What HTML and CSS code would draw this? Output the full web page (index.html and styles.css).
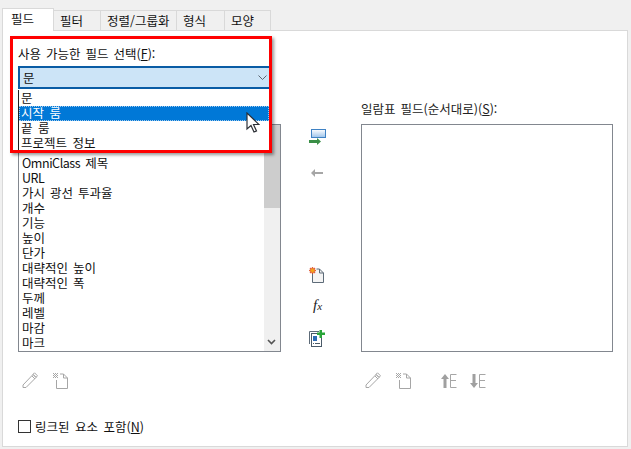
FILE: index.html
```html
<!DOCTYPE html>
<html lang="ko">
<head>
<meta charset="utf-8">
<title>일람표 특성</title>
<link rel="stylesheet" href="styles.css">
</head>
<body>
<div class="dialog">
  <div class="tabs">
    <div class="tab active">필드</div>
    <div class="tab w47">필터</div>
    <div class="tab w76">정렬/그룹화</div>
    <div class="tab w48">형식</div>
    <div class="tab w46">모양</div>
  </div>
  <div class="panel">
    <div class="label">사용 가능한 필드 선택(<u>F</u>):</div>
    <div class="select">
      <span>문</span>
      <svg class="chev" width="9" height="5" viewBox="0 0 9 5"><path d="M.5.5l4 4 4-4" fill="none" stroke="#5a6470"/></svg>
    </div>
    <div class="columns">
      <div class="col">
        <div class="sub"></div>
        <div class="listbox">
          <div class="rows">
            <div></div>
            <div></div>
            <div><span class="lat">OmniClass</span> 제목</div>
            <div><span class="lat">URL</span></div>
            <div>가시 광선 투과율</div>
            <div>개수</div>
            <div>기능</div>
            <div>높이</div>
            <div>단가</div>
            <div>대략적인 높이</div>
            <div>대략적인 폭</div>
            <div>두께</div>
            <div>레벨</div>
            <div>마감</div>
            <div>마크</div>
          </div>
          <div class="scroll">
            <div class="thumb"></div>
            <svg class="down" width="9" height="6" viewBox="0 0 9 6"><path d="M1 1l3.500 3.500L8 1" fill="none" stroke="#555" stroke-width="1.600"/></svg>
          </div>
        </div>
        <div class="tools">
          <svg width="16" height="17" viewBox="0 0 16 17"><path d="M1 13L11 2.500l3 3L4 15.500H1zM10 4l3 3M12.500.8l3 3-1.500 1.500-3-3z" fill="none" stroke="#a6a6a6"/></svg>
          <svg width="15" height="17" viewBox="0 0 15 17"><path d="M3.500 8v8.500h11V6l-4-4H7M10.500 2v4h4" fill="none" stroke="#a6a6a6"/><path d="M0 1h1v1H0zM2 1h1v1H2zM4 1h1v1H4zM1 2h1v1H1zM3 2h1v1H3zM0 3h1v1H0zM2 3h1v1H2zM4 3h1v1H4zM1 4h1v1H1zM3 4h1v1H3zM0 5h1v1H0zM2 5h1v1H2zM4 5h1v1H4z" fill="#a6a6a6"/></svg>
        </div>
      </div>
      <div class="mid">
        <svg class="m-add" width="17" height="17" viewBox="0 0 17 17">
          <defs><linearGradient id="g" x1="0" y1="0" x2="0" y2="1"><stop offset="0" stop-color="#fff"/><stop offset="1" stop-color="#9cc3ea"/></linearGradient></defs>
          <rect x="2.500" y=".5" width="14" height="8" fill="url(#g)" stroke="#3f82c4"/>
          <path d="M0 11h8V9l4 3.500L8 16v-2H0z" fill="#3a8f46"/>
        </svg>
        <svg class="m-rem" width="12" height="8" viewBox="0 0 12 8"><path d="M12 3H4V0L0 4l4 4V5h8z" fill="#a6a6a6"/></svg>
        <svg class="m-new" width="16" height="16" viewBox="0 0 16 16">
          <path d="M3.500 6v9.500h11V6l-4-4H7.500M10.500 2v4h4" fill="#f4f4f4" stroke="#5d6b78"/>
          <path d="M3.500 0l.8 1.700L6 1l-.7 1.700L7 3.500l-1.700.8L6 6l-1.700-.7L3.500 7l-.8-1.700L1 6l.7-1.700L0 3.500l1.700-.8L1 1l1.700.7z" fill="#f2a21b" stroke="#d8301a" stroke-width=".6"/>
        </svg>
        <div class="fx"><i>f</i><i class="x">x</i></div>
        <svg class="m-param" width="16" height="17" viewBox="0 0 16 17">
          <path d="M.5 14V1.500H10" fill="none" stroke="#5d6b78"/>
          <rect x="2.500" y="3.500" width="10" height="13" fill="#fff" stroke="#4a5a68"/>
          <rect x="4" y="6" width="4" height="5" fill="#2d6cb4"/>
          <path d="M6 13.500h5M4 13.500h1" stroke="#4a5a68"/>
          <path d="M10.500 0h2.500v2.500h3V5h-3v3h-2.500V5H8V2.500h2.500z" fill="#2aa53a"/>
        </svg>
      </div>
      <div class="col right">
        <div class="label sub on">일람표 필드(순서대로)(<u>S</u>):</div>
        <div class="listbox"></div>
        <div class="tools">
          <svg width="16" height="17" viewBox="0 0 16 17"><path d="M1 13L11 2.500l3 3L4 15.500H1zM10 4l3 3M12.500.8l3 3-1.500 1.500-3-3z" fill="none" stroke="#a6a6a6"/></svg>
          <svg width="15" height="17" viewBox="0 0 15 17"><path d="M3.500 8v8.500h11V6l-4-4H7M10.500 2v4h4" fill="none" stroke="#a6a6a6"/><path d="M0 1h1v1H0zM2 1h1v1H2zM4 1h1v1H4zM1 2h1v1H1zM3 2h1v1H3zM0 3h1v1H0zM2 3h1v1H2zM4 3h1v1H4zM1 4h1v1H1zM3 4h1v1H3zM0 5h1v1H0zM2 5h1v1H2zM4 5h1v1H4z" fill="#a6a6a6"/></svg>
          <svg class="t-up" width="16" height="14" viewBox="0 0 16 14"><path d="M4 0l4 5H5.500v9h-3V5H0z" fill="#a0a0a0"/><path d="M15.500 .5H9.500v13h6M9.500 6.500h5.500" fill="none" stroke="#a6a6a6"/></svg>
          <svg class="t-down" width="16" height="14" viewBox="0 0 16 14"><path d="M4 14l4-5H5.500V0h-3v9H0z" fill="#a0a0a0"/><path d="M15.500 .5H9.500v13h6M9.500 6.500h5.500" fill="none" stroke="#a6a6a6"/></svg>
        </div>
      </div>
    </div>
    <label class="check"><span class="box"></span>링크된 요소 포함(<u>N</u>)</label>

    <div class="menu">
      <div class="item">문</div>
      <div class="item hot">시작 룸</div>
      <div class="item">끝 룸</div>
      <div class="item">프로젝트 정보</div>
    </div>
    <div class="callout"></div>
    <svg class="cursor" width="14" height="21" viewBox="0 0 14 21"><path d="M1 1v16l4-3.500 3 6.500 2.500-1-3-6.500H13z" fill="#fff" stroke="#2c3036" stroke-width="1.200"/></svg>
  </div>
</div>
</body>
</html>
```
FILE: styles.css
```css
* { box-sizing: border-box; }
html, body { margin: 0; height: 100%; }
body {
  width: 631px;
  height: 449px;
  overflow: hidden;
  background: #f0f0f0;
  font-family: "Noto Sans CJK KR", "Noto Sans", sans-serif;
  font-size: 12.500px;
  color: #111;
}
.dialog { padding: 8px 3px 2px 2px; height: 449px; display: flex; flex-direction: column; }
.tabs { display: flex; height: 22px; align-items: flex-end; }
.tab {
  height: 20px;
  width: 47px;
  padding: 0 0 0 6px;
  line-height: 20px;
  font-size: 12.500px;
  background: #f0f0f0;
  border: 1px solid #d9d9d9;
  border-bottom: 0;
  margin-left: -1px;
  word-spacing: 1px;
}
.tab.active {
  height: 23px;
  width: 52px;
  margin: 0 0 -1px 0;
  padding-left: 8px;
  line-height: 19px;
  background: #fff;
  position: relative;
  z-index: 1;
}
.tab.w47 { width: 48px; }
.tab.w76 { width: 77px; }
.tab.w48 { width: 49px; }
.tab.w46 { width: 47px; }
.panel {
  flex: 1;
  position: relative;
  background: #fff;
  border: 1px solid #d9d9d9;
  padding: 14px 0 0 15px;
}
.label { height: 18px; line-height: 17px; word-spacing: 1.500px; }
.select {
  margin-top: 3px;
  width: 251px;
  height: 23px;
  background: #cce4f7;
  border: 2px solid #0a5ca5;
  border-right: 0;
  padding-left: 3px;
  line-height: 19px;
  display: flex;
  justify-content: space-between;
  align-items: center;
}
.chev { margin-right: 2px; }
.columns { display: flex; margin-top: 11px; }
.col { width: 263px; }
.right { width: 252px; }
.sub { height: 24px; }
.on { color: #222; }
.listbox {
  height: 228px;
  border: 1px solid #82878f;
  background: #fff;
  display: flex;
  overflow: hidden;
}
.rows { flex: 1; padding-left: 3px; line-height: 15px; word-spacing: 1.500px; }
.rows div { height: 15px; white-space: nowrap; }
.lat { letter-spacing: -.45px; }
.scroll { width: 16px; background: #f0f0f0; position: relative; }
.thumb { height: 83px; background: #cdcdcd; }
.down { position: absolute; left: 3px; bottom: 6px; }
.tools { display: flex; align-items: flex-start; gap: 15px; margin-top: 20px; padding-left: 4px; height: 17px; }
.t-up { margin: 2px 0 0 15px; }
.t-down { margin: 2px 0 0 -2px; }
.mid { width: 80px; display: flex; flex-direction: column; align-items: center; padding-top: 23px; }
.m-add { margin: 6px 0 0 -8px; }
.m-rem { margin: 23px 0 0 -8px; }
.m-new { margin: 90px 0 0 -8px; }
.fx { margin: 14px 0 0 -7px; height: 16px; line-height: 16px; font-family: "Liberation Serif", serif; font-size: 15px; color: #222; }
.fx .x { font-size: 11px; }
.m-param { margin: 17px 0 0 -8px; }
.check { display: flex; align-items: center; margin-top: 29px; height: 16px; line-height: 15px; word-spacing: 2px; white-space: pre; }
.box { width: 13px; height: 13px; border: 1px solid #333; margin-right: 4px; background: #fff; }
.menu {
  position: absolute;
  left: 15px;
  top: 59px;
  width: 251px;
  height: 61px;
  background: #fff;
  border-left: 1px solid #222;
  word-spacing: 2px;
  padding-top: 1px;
}
.item { height: 15px; line-height: 13px; padding-left: 2px; }
.hot { background: #0078d7; color: #fff; outline: 1px dotted #9cc8ee; outline-offset: -1px; }
.callout {
  position: absolute;
  left: 7px;
  top: 5px;
  width: 262px;
  height: 117px;
  border: 3px solid #ff0000;
  box-shadow: 2px 2px 3px rgba(0, 0, 0, .4);
  pointer-events: none;
}
.cursor { position: absolute; left: 243px; top: 81px; }
```
